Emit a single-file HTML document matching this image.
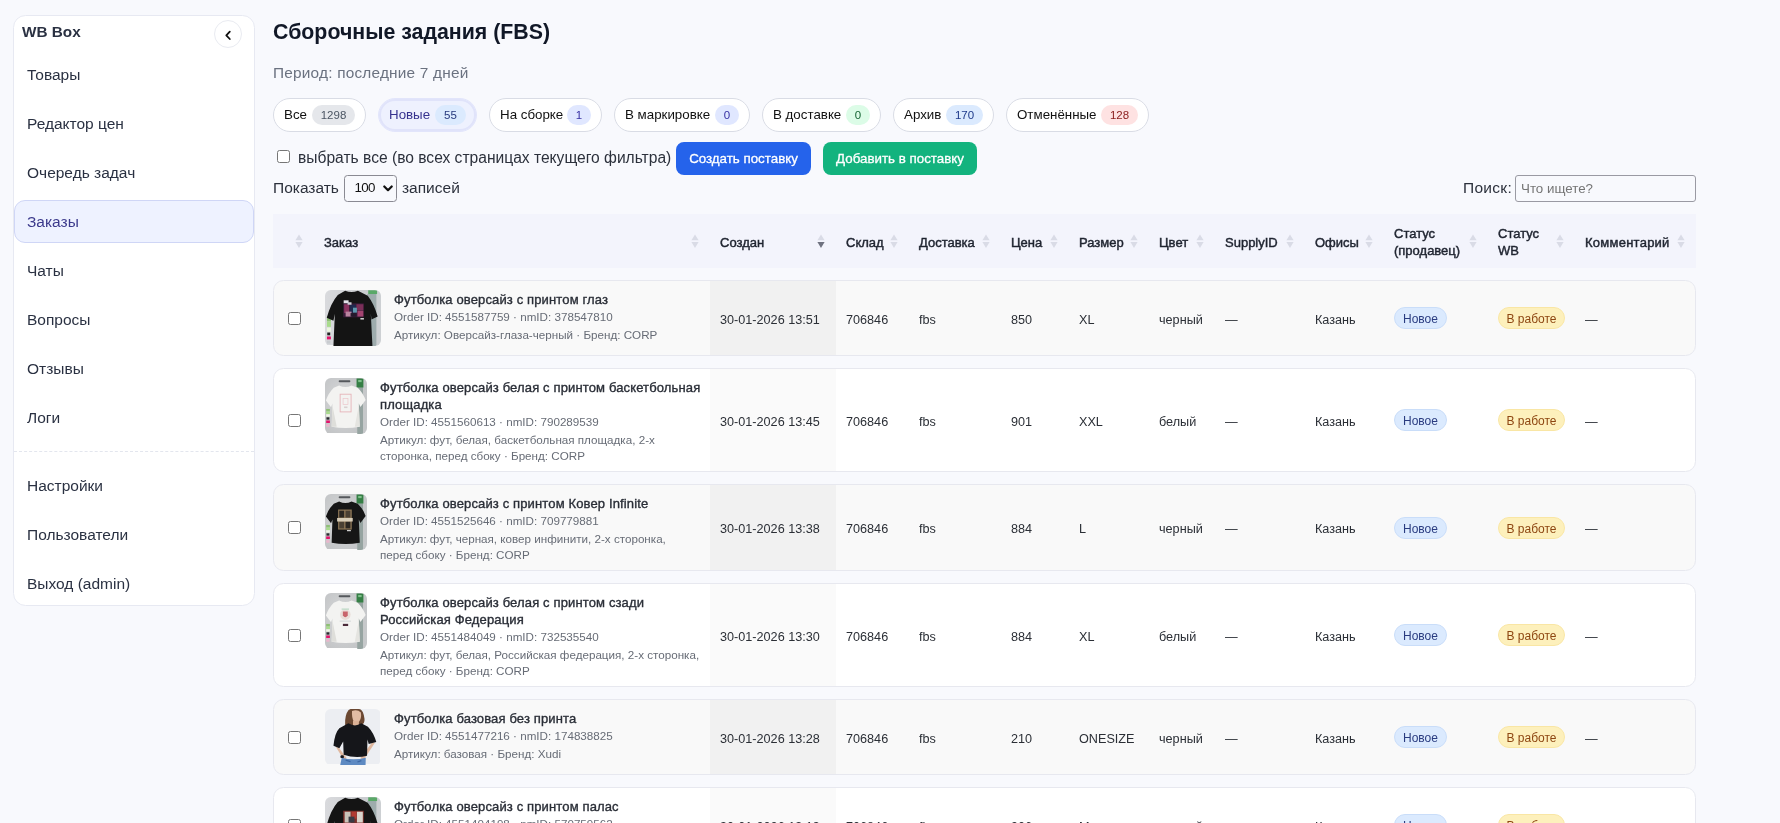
<!DOCTYPE html>
<html lang="ru">
<head>
<meta charset="utf-8">
<title>WB Box — Сборочные задания (FBS)</title>
<style>
*{box-sizing:border-box}
html,body{margin:0;padding:0}
body{will-change:transform;width:1780px;height:823px;overflow:hidden;background:#f8f9fd;font-family:"Liberation Sans",sans-serif;color:#1f2937;position:relative}
/* sidebar */
.side{position:absolute;left:13px;top:15px;width:242px;height:591px;background:#fff;border:1px solid #e7e9f2;border-radius:12.5px}
.brand{position:absolute;left:8px;top:7px;font-weight:700;font-size:15.3px;line-height:18px;color:#2a3142;white-space:nowrap}
.collapse{position:absolute;left:200px;top:4px;width:28px;height:28px;border:1px solid #e9ebf1;border-radius:50%;background:#fff}
.collapse svg{position:absolute;left:0;top:0}
.nav a{position:absolute;left:0;width:240px;height:43px;line-height:41px;padding-left:12px;font-size:15.5px;color:#2a3142;text-decoration:none;border:1px solid transparent;border-radius:11px;white-space:nowrap}
.nav a.act{background:#eef2ff;border-color:#cfd6f6;color:#3c3a8c}
.sep{position:absolute;left:0;top:435px;width:240px;border-top:1px dashed #e3e6ee}
/* main */
h1{position:absolute;left:273px;top:18px;margin:0;font-size:21.35px;line-height:28px;font-weight:700;color:#111827;white-space:nowrap}
.period{position:absolute;left:273px;top:63px;font-size:15.4px;letter-spacing:.2px;line-height:20px;color:#6b7280;white-space:nowrap}
.pill{position:absolute;top:98px;height:34px;border:1px solid #d9dce5;border-radius:17px;background:#fff;font-size:13.33px;line-height:32px;color:#111;padding-left:10px;white-space:nowrap}
.pill b{position:absolute;top:6px;right:10px;height:20px;line-height:20px;border-radius:10px;font-weight:400;font-size:11.5px;text-align:center;padding:0}
.pill.on{background:#eef1fe;border-color:#e2e5fb;color:#37338f;box-shadow:inset 0 0 0 2px #e0e3fa}
.selall{position:absolute;left:298px;top:148px;font-size:15.6px;line-height:20px;color:#2c313c;white-space:nowrap}
.cb{position:absolute;width:13px;height:13px;border:1px solid #767676;border-radius:2.5px;background:#fff}
.btn{position:absolute;top:142px;height:33px;border-radius:8px;color:#fff;font-size:13.33px;line-height:33px;text-align:center;white-space:nowrap;-webkit-text-stroke:.3px #fff}
.len{position:absolute;left:273px;top:178px;font-size:15.5px;line-height:20px;color:#2c313c;white-space:nowrap}
.sel{position:absolute;left:344px;top:175px;width:53px;height:26.5px;border:1px solid #8a8a93;border-radius:3.5px;background:transparent;font-size:13.33px;letter-spacing:-.65px;line-height:23.5px;padding-left:9.5px;color:#111}
.sel svg{position:absolute;right:3.5px;top:8.5px}
.srch{position:absolute;left:1463px;top:178px;letter-spacing:.3px;font-size:15.5px;line-height:20px;color:#2c313c;white-space:nowrap}
.inp{position:absolute;left:1515px;top:175px;width:181px;height:27px;border:1px solid #9a9aa3;border-radius:3px;background:#f8f9fd;font-size:13.33px;line-height:25px;padding-left:5px;color:#757575;white-space:nowrap}
/* table */
.thead{position:absolute;left:273px;top:213.5px;width:1423px;height:54px;background:#f3f4fc}
.th{position:absolute;font-size:13px;line-height:17px;font-weight:400;-webkit-text-stroke:.45px #1f2430;color:#1f2430;white-space:nowrap}
.ar{position:absolute;width:8px;height:15px}
.row{position:absolute;left:273px;width:1423px;border:1px solid #e7e8ef;border-radius:10.5px;background:#fff;overflow:hidden}
.row.odd{background:#f9f9f9}
.row .sc{position:absolute;left:436px;top:-1px;bottom:-1px;width:126px;background:#fafafa}
.row.odd .sc{background:#f1f1f1}
.c{position:absolute;font-size:12.65px;line-height:16px;color:#2b2f36;white-space:nowrap}
.t{position:absolute;font-size:13px;letter-spacing:.14px;line-height:17px;font-weight:400;-webkit-text-stroke:.36px #2a2e37;color:#2a2e37;white-space:nowrap}
.m{position:absolute;font-size:11.65px;line-height:16px;color:#676c76;white-space:nowrap}
.bd{position:absolute;height:22px;line-height:22px;border-radius:11px;font-size:12px;text-align:center;border:1px solid}
.bn{left:1120px;width:53px;background:#dbeafe;border-color:#c9ddf9;color:#2a3c80}
.bw{left:1224px;width:67px;background:#fdf0bc;border-color:#f9e6a4;color:#8e4712}
.im{position:absolute;left:51px;border-radius:6px;overflow:hidden}
.im svg{display:block;filter:blur(.35px)}
</style>
</head>
<body>
<div class="side">
  <div class="brand">WB Box</div>
  <div class="collapse"><svg width="26" height="26" viewBox="0 0 26 26"><path d="M14.8 10.6 L11.3 14.3 L14.8 18" fill="none" stroke="#111" stroke-width="1.8" stroke-linecap="round" stroke-linejoin="round"/></svg></div>
  <div class="nav">
    <a style="top:37px">Товары</a>
    <a style="top:86px">Редактор цен</a>
    <a style="top:135px">Очередь задач</a>
    <a class="act" style="top:184px">Заказы</a>
    <a style="top:233px">Чаты</a>
    <a style="top:282px">Вопросы</a>
    <a style="top:331px">Отзывы</a>
    <a style="top:380px">Логи</a>
    <a style="top:448px">Настройки</a>
    <a style="top:497px">Пользователи</a>
    <a style="top:546px">Выход (admin)</a>
  </div>
  <div class="sep"></div>
</div>

<h1>Сборочные задания (FBS)</h1>
<div class="period">Период: последние 7 дней</div>

<div class="pill" style="left:273px;width:93px">Все<b style="width:43px;background:#e5e7eb;color:#4b5563">1298</b></div>
<div class="pill on" style="left:378px;width:99px">Новые<b style="width:31px;background:#dbeafe;color:#27397d">55</b></div>
<div class="pill" style="left:489px;width:113px">На сборке<b style="width:24px;background:#e0e7ff;color:#3730a3">1</b></div>
<div class="pill" style="left:614px;width:136px">В маркировке<b style="width:24px;background:#e0e7ff;color:#3730a3">0</b></div>
<div class="pill" style="left:762px;width:119px">В доставке<b style="width:24px;background:#dcfce7;color:#166534">0</b></div>
<div class="pill" style="left:893px;width:101px">Архив<b style="width:37px;background:#dbeafe;color:#1e3a8a">170</b></div>
<div class="pill" style="left:1006px;width:143px">Отменённые<b style="width:37px;background:#fee2e2;color:#8a1c1c">128</b></div>

<div class="cb" style="left:277px;top:150px"></div>
<div class="selall">выбрать все (во всех страницах текущего фильтра)</div>
<div class="btn" style="left:676px;width:135px;background:#2563eb">Создать поставку</div>
<div class="btn" style="left:823px;width:154px;background:#13b37e">Добавить в поставку</div>

<div class="len">Показать</div>
<div class="sel">100<svg width="10" height="7" viewBox="0 0 10 7"><path d="M1.3 1.5 L5 5.2 L8.7 1.5" fill="none" stroke="#111" stroke-width="2.2" stroke-linecap="round" stroke-linejoin="round"/></svg></div>
<div class="len" style="left:402px">записей</div>
<div class="srch">Поиск:</div>
<div class="inp">Что ищете?</div>

<div class="thead">
<svg class="ar" style="left:22.4px;top:20.5px" width="8" height="15" viewBox="0 0 8 15"><path d="M4 0.4 L7.6 6.3 H0.4 Z" fill="#d9dbe6"/><path d="M0.4 8 H7.6 L4 13.9 Z" fill="#d9dbe6"/></svg>
<div class="th" style="left:51px;top:20.5px">Заказ</div><svg class="ar" style="left:418.4px;top:20.5px" width="8" height="15" viewBox="0 0 8 15"><path d="M4 0.4 L7.6 6.3 H0.4 Z" fill="#d9dbe6"/><path d="M0.4 8 H7.6 L4 13.9 Z" fill="#d9dbe6"/></svg>
<div class="th" style="left:447px;top:20.5px">Создан</div><svg class="ar" style="left:544.4px;top:20.5px" width="8" height="15" viewBox="0 0 8 15"><path d="M4 0.4 L7.6 6.3 H0.4 Z" fill="#d9dbe6"/><path d="M0.4 8 H7.6 L4 13.9 Z" fill="#6f7280"/></svg>
<div class="th" style="left:573px;top:20.5px">Склад</div><svg class="ar" style="left:617.4px;top:20.5px" width="8" height="15" viewBox="0 0 8 15"><path d="M4 0.4 L7.6 6.3 H0.4 Z" fill="#d9dbe6"/><path d="M0.4 8 H7.6 L4 13.9 Z" fill="#d9dbe6"/></svg>
<div class="th" style="left:646px;top:20.5px">Доставка</div><svg class="ar" style="left:709.4px;top:20.5px" width="8" height="15" viewBox="0 0 8 15"><path d="M4 0.4 L7.6 6.3 H0.4 Z" fill="#d9dbe6"/><path d="M0.4 8 H7.6 L4 13.9 Z" fill="#d9dbe6"/></svg>
<div class="th" style="left:738px;top:20.5px">Цена</div><svg class="ar" style="left:777.4px;top:20.5px" width="8" height="15" viewBox="0 0 8 15"><path d="M4 0.4 L7.6 6.3 H0.4 Z" fill="#d9dbe6"/><path d="M0.4 8 H7.6 L4 13.9 Z" fill="#d9dbe6"/></svg>
<div class="th" style="left:806px;top:20.5px">Размер</div><svg class="ar" style="left:857.4px;top:20.5px" width="8" height="15" viewBox="0 0 8 15"><path d="M4 0.4 L7.6 6.3 H0.4 Z" fill="#d9dbe6"/><path d="M0.4 8 H7.6 L4 13.9 Z" fill="#d9dbe6"/></svg>
<div class="th" style="left:886px;top:20.5px">Цвет</div><svg class="ar" style="left:923.4px;top:20.5px" width="8" height="15" viewBox="0 0 8 15"><path d="M4 0.4 L7.6 6.3 H0.4 Z" fill="#d9dbe6"/><path d="M0.4 8 H7.6 L4 13.9 Z" fill="#d9dbe6"/></svg>
<div class="th" style="left:952px;top:20.5px">SupplyID</div><svg class="ar" style="left:1013.4px;top:20.5px" width="8" height="15" viewBox="0 0 8 15"><path d="M4 0.4 L7.6 6.3 H0.4 Z" fill="#d9dbe6"/><path d="M0.4 8 H7.6 L4 13.9 Z" fill="#d9dbe6"/></svg>
<div class="th" style="left:1042px;top:20.5px">Офисы</div><svg class="ar" style="left:1092.4px;top:20.5px" width="8" height="15" viewBox="0 0 8 15"><path d="M4 0.4 L7.6 6.3 H0.4 Z" fill="#d9dbe6"/><path d="M0.4 8 H7.6 L4 13.9 Z" fill="#d9dbe6"/></svg>
<div class="th" style="left:1121px;top:11.5px">Статус<br>(продавец)</div><svg class="ar" style="left:1196.4px;top:20.5px" width="8" height="15" viewBox="0 0 8 15"><path d="M4 0.4 L7.6 6.3 H0.4 Z" fill="#d9dbe6"/><path d="M0.4 8 H7.6 L4 13.9 Z" fill="#d9dbe6"/></svg>
<div class="th" style="left:1225px;top:11.5px">Статус<br>WB</div><svg class="ar" style="left:1283.4px;top:20.5px" width="8" height="15" viewBox="0 0 8 15"><path d="M4 0.4 L7.6 6.3 H0.4 Z" fill="#d9dbe6"/><path d="M0.4 8 H7.6 L4 13.9 Z" fill="#d9dbe6"/></svg>
<div class="th" style="left:1312px;top:20.5px;letter-spacing:.25px">Комментарий</div><svg class="ar" style="left:1404.4px;top:20.5px" width="8" height="15" viewBox="0 0 8 15"><path d="M4 0.4 L7.6 6.3 H0.4 Z" fill="#d9dbe6"/><path d="M0.4 8 H7.6 L4 13.9 Z" fill="#d9dbe6"/></svg>
</div>

<div class="row odd" style="top:280px;height:76px">
<div class="sc"></div><div class="cb" style="left:14px;top:31px"></div><div class="im" style="top:9px;width:56px;height:56px"><svg width="56" height="56" preserveAspectRatio="none" viewBox="0 0 57 57"><defs><linearGradient id="gA" x1="0" x2="1"><stop offset="0" stop-color="#d9dadd"/><stop offset=".5" stop-color="#cfd1d4"/><stop offset="1" stop-color="#c3c6c9"/></linearGradient></defs><rect width="56" height="56" preserveAspectRatio="none" fill="url(#gA)"/><rect x="43" y="4" width="9.5" height="53" fill="#9eacad"/><rect x="52.5" y="0" width="4.5" height="57" fill="#cdd0d3"/><rect x="44" y="0.3" width="9" height="3.8" fill="#5aa868"/><rect x="2" y="27" width="4" height="5" fill="#8fbf76"/><rect x="2" y="32" width="4" height="5.5" fill="#a9dc8c"/><rect x="2" y="38.3" width="4" height="4.2" fill="#ecf6df"/><rect x="2.3" y="43.3" width="3" height="2.8" fill="#222"/><rect x="2" y="47.3" width="4" height="3" fill="#e2136b"/><rect x="2" y="51.5" width="3.5" height="3" fill="#c9ccd0"/><path d="M20.5 0.8 Q27 3.4 33.5 0.8 L43.5 5.8 Q50 14 53.6 27 L47.3 30 L46.6 24 L48.3 57 H8.6 L10 24.5 L8.6 31.4 L1.8 28.2 Q6 13 13 5 Z" fill="#141414"/><rect x="18.5" y="13.6" width="21" height="14.2" fill="#3a1c3a"/><rect x="19.5" y="14.5" width="5" height="9" fill="#8a3560"/><rect x="25.5" y="15" width="6" height="8" fill="#1f2a4f"/><rect x="32" y="14.5" width="7" height="6" fill="#7a2f58"/><rect x="33" y="21" width="6" height="6" fill="#a34470"/><rect x="28.5" y="18" width="4" height="5" fill="#5e98ae"/><rect x="21" y="22" width="6" height="5" fill="#b9849f"/><rect x="26" y="23.5" width="6" height="3.6" fill="#241a2c"/><rect x="19" y="10.5" width="5" height="3" fill="#e4e4ea"/><rect x="23" y="12.5" width="4" height="2.5" fill="#cfcfd8"/><rect x="36" y="28.5" width="3.6" height="1.6" fill="#d0d0d0"/></svg></div>
<div class="t" style="left:120px;top:10px">Футболка оверсайз с принтом глаз</div><div class="m" style="left:120px;top:28px">Order ID: 4551587759 · nmID: 378547810</div><div class="m" style="left:120px;top:46px">Артикул: Оверсайз-глаза-черный · Бренд: CORP</div>
<div class="c" style="left:446px;top:31.0px">30-01-2026 13:51</div><div class="c" style="left:572px;top:31.0px">706846</div><div class="c" style="left:645px;top:31.0px">fbs</div><div class="c" style="left:737px;top:31.0px">850</div><div class="c" style="left:805px;top:31.0px">XL</div><div class="c" style="left:885px;top:31.0px">черный</div><div class="c" style="left:951px;top:31.0px">—</div><div class="c" style="left:1041px;top:31.0px">Казань</div><div class="c" style="left:1311px;top:31.0px">—</div><div class="bd bn" style="top:26.0px">Новое</div><div class="bd bw" style="top:26.0px">В работе</div>
</div>
<div class="row" style="top:368px;height:104px">
<div class="sc"></div><div class="cb" style="left:14px;top:45px"></div><div class="im" style="top:9px;width:42px;height:56px"><svg width="42" height="56" preserveAspectRatio="none" viewBox="0 0 43 57"><defs><radialGradient id="gBa" cx=".45" cy=".45" r=".75"><stop offset="0" stop-color="#d9dadb"/><stop offset="1" stop-color="#bfc1c3"/></radialGradient></defs><rect width="42" height="56" preserveAspectRatio="none" fill="url(#gBa)"/><rect x="33" y="9.5" width="6" height="47.5" fill="#96a4a1"/><rect x="39" y="0" width="4" height="57" fill="#c6c8ca"/><rect x="32.3" y="0.5" width="7" height="9.2" fill="#357f45"/><rect x="34" y="2" width="3.5" height="2.2" fill="#7fc08a"/><rect x="14" y="2.2" width="12" height="2.2" rx="1" fill="#55585c"/><rect x="1.2" y="31.5" width="3.8" height="2.6" fill="#8fbf76"/><rect x="1.2" y="34.1" width="3.8" height="2.6" fill="#a9dc8c"/><rect x="1.2" y="36.9" width="3.8" height="2.4" fill="#eef6e4"/><rect x="1.5" y="40" width="3" height="2.4" fill="#2a2a2e"/><rect x="1.2" y="43.2" width="3.8" height="2.6" fill="#e2136b"/><rect x="1.2" y="47" width="3.4" height="2.6" fill="#eab6cc"/><path d="M14.5 7.6 Q20.8 10.8 27.2 7.6 L33.5 9.8 Q39 15 41.6 22.5 L36.3 29.6 L34.6 26 L35.6 49.6 Q21 52 6.8 49.6 L7.6 26 L6.2 29.8 L0.9 23 Q3.5 15 9 9.8 Z" fill="#f3f3f1"/><path d="M7.6 28 L6.9 49.5 H12 Z" fill="#dededa"/><path d="M34.6 28 L35.5 49.5 H30.5 Z" fill="#e4e4e0"/><rect x="15.5" y="16.5" width="11.2" height="18" fill="none" stroke="#e6b3b8" stroke-width="0.9"/><rect x="18.5" y="21" width="5" height="6" fill="none" stroke="#ecc6ca" stroke-width="0.7"/><rect x="19.5" y="29" width="3.5" height="1.6" fill="#d9d0d0"/></svg></div>
<div class="t" style="left:106px;top:10px">Футболка оверсайз белая с принтом баскетбольная</div><div class="t" style="left:106px;top:27px">площадка</div><div class="m" style="left:106px;top:45px">Order ID: 4551560613 · nmID: 790289539</div><div class="m" style="left:106px;top:63px">Артикул: фут, белая, баскетбольная площадка, 2-х</div><div class="m" style="left:106px;top:79px">сторонка, перед сбоку · Бренд: CORP</div>
<div class="c" style="left:446px;top:45.0px">30-01-2026 13:45</div><div class="c" style="left:572px;top:45.0px">706846</div><div class="c" style="left:645px;top:45.0px">fbs</div><div class="c" style="left:737px;top:45.0px">901</div><div class="c" style="left:805px;top:45.0px">XXL</div><div class="c" style="left:885px;top:45.0px">белый</div><div class="c" style="left:951px;top:45.0px">—</div><div class="c" style="left:1041px;top:45.0px">Казань</div><div class="c" style="left:1311px;top:45.0px">—</div><div class="bd bn" style="top:40.0px">Новое</div><div class="bd bw" style="top:40.0px">В работе</div>
</div>
<div class="row odd" style="top:484px;height:87px">
<div class="sc"></div><div class="cb" style="left:14px;top:36px"></div><div class="im" style="top:9px;width:42px;height:56px"><svg width="42" height="56" preserveAspectRatio="none" viewBox="0 0 43 57"><defs><radialGradient id="gBb" cx=".45" cy=".45" r=".75"><stop offset="0" stop-color="#d9dadb"/><stop offset="1" stop-color="#bfc1c3"/></radialGradient></defs><rect width="42" height="56" preserveAspectRatio="none" fill="url(#gBb)"/><rect x="33" y="9.5" width="6" height="47.5" fill="#96a4a1"/><rect x="39" y="0" width="4" height="57" fill="#c6c8ca"/><rect x="32.3" y="0.5" width="7" height="9.2" fill="#357f45"/><rect x="34" y="2" width="3.5" height="2.2" fill="#7fc08a"/><rect x="14" y="2.2" width="12" height="2.2" rx="1" fill="#55585c"/><rect x="1.2" y="31.5" width="3.8" height="2.6" fill="#8fbf76"/><rect x="1.2" y="34.1" width="3.8" height="2.6" fill="#a9dc8c"/><rect x="1.2" y="36.9" width="3.8" height="2.4" fill="#eef6e4"/><rect x="1.5" y="40" width="3" height="2.4" fill="#2a2a2e"/><rect x="1.2" y="43.2" width="3.8" height="2.6" fill="#e2136b"/><rect x="1.2" y="47" width="3.4" height="2.6" fill="#eab6cc"/><path d="M14.5 7.6 Q20.8 10.8 27.2 7.6 L33.5 9.8 Q39 15 41.6 22.5 L36.3 29.6 L34.6 26 L35.6 49.6 Q21 52 6.8 49.6 L7.6 26 L6.2 29.8 L0.9 23 Q3.5 15 9 9.8 Z" fill="#161616"/><rect x="13.4" y="15.8" width="14" height="20.4" fill="#8d7656"/><rect x="14.6" y="17" width="5" height="7" fill="#2a2622"/><rect x="21" y="17" width="5" height="7" fill="#4a4034"/><rect x="14.6" y="28" width="5" height="7" fill="#4a4034"/><rect x="21" y="28" width="5" height="7" fill="#2a2622"/><rect x="12.4" y="24.4" width="16" height="3.6" fill="#d8cdb8"/><rect x="22.5" y="36.6" width="4" height="1.3" fill="#cfcfcf"/></svg></div>
<div class="t" style="left:106px;top:10px">Футболка оверсайз с принтом Ковер Infinite</div><div class="m" style="left:106px;top:28px">Order ID: 4551525646 · nmID: 709779881</div><div class="m" style="left:106px;top:46px">Артикул: фут, черная, ковер инфинити, 2-х сторонка,</div><div class="m" style="left:106px;top:62px">перед сбоку · Бренд: CORP</div>
<div class="c" style="left:446px;top:36.0px">30-01-2026 13:38</div><div class="c" style="left:572px;top:36.0px">706846</div><div class="c" style="left:645px;top:36.0px">fbs</div><div class="c" style="left:737px;top:36.0px">884</div><div class="c" style="left:805px;top:36.0px">L</div><div class="c" style="left:885px;top:36.0px">черный</div><div class="c" style="left:951px;top:36.0px">—</div><div class="c" style="left:1041px;top:36.0px">Казань</div><div class="c" style="left:1311px;top:36.0px">—</div><div class="bd bn" style="top:32.0px">Новое</div><div class="bd bw" style="top:32.0px">В работе</div>
</div>
<div class="row" style="top:583px;height:104px">
<div class="sc"></div><div class="cb" style="left:14px;top:45px"></div><div class="im" style="top:9px;width:42px;height:56px"><svg width="42" height="56" preserveAspectRatio="none" viewBox="0 0 43 57"><defs><radialGradient id="gBc" cx=".45" cy=".45" r=".75"><stop offset="0" stop-color="#d9dadb"/><stop offset="1" stop-color="#bfc1c3"/></radialGradient></defs><rect width="42" height="56" preserveAspectRatio="none" fill="url(#gBc)"/><rect x="33" y="9.5" width="6" height="47.5" fill="#96a4a1"/><rect x="39" y="0" width="4" height="57" fill="#c6c8ca"/><rect x="32.3" y="0.5" width="7" height="9.2" fill="#357f45"/><rect x="34" y="2" width="3.5" height="2.2" fill="#7fc08a"/><rect x="14" y="2.2" width="12" height="2.2" rx="1" fill="#55585c"/><rect x="1.2" y="31.5" width="3.8" height="2.6" fill="#8fbf76"/><rect x="1.2" y="34.1" width="3.8" height="2.6" fill="#a9dc8c"/><rect x="1.2" y="36.9" width="3.8" height="2.4" fill="#eef6e4"/><rect x="1.5" y="40" width="3" height="2.4" fill="#2a2a2e"/><rect x="1.2" y="43.2" width="3.8" height="2.6" fill="#e2136b"/><rect x="1.2" y="47" width="3.4" height="2.6" fill="#eab6cc"/><path d="M14.5 7.6 Q20.8 10.8 27.2 7.6 L33.5 9.8 Q39 15 41.6 22.5 L36.3 29.6 L34.6 26 L35.6 49.6 Q21 52 6.8 49.6 L7.6 26 L6.2 29.8 L0.9 23 Q3.5 15 9 9.8 Z" fill="#f3f3f1"/><path d="M7.6 28 L6.9 49.5 H12 Z" fill="#dededa"/><path d="M34.6 28 L35.5 49.5 H30.5 Z" fill="#e4e4e0"/><circle cx="20.8" cy="22" r="5.4" fill="#eaded8"/><path d="M18.3 18.8 H23.3 V23 Q20.8 26.6 18.3 23 Z" fill="#c9656b"/><rect x="15" y="28.2" width="11.5" height="0.8" fill="#c8cfd0"/><rect x="18.3" y="31.4" width="5.4" height="2.2" fill="#4a2a3a"/><rect x="17" y="15.8" width="7.6" height="1.2" fill="#b9d8c2"/></svg></div>
<div class="t" style="left:106px;top:10px">Футболка оверсайз белая с принтом сзади</div><div class="t" style="left:106px;top:27px">Российская Федерация</div><div class="m" style="left:106px;top:45px">Order ID: 4551484049 · nmID: 732535540</div><div class="m" style="left:106px;top:63px">Артикул: фут, белая, Российская федерация, 2-х сторонка,</div><div class="m" style="left:106px;top:79px">перед сбоку · Бренд: CORP</div>
<div class="c" style="left:446px;top:45.0px">30-01-2026 13:30</div><div class="c" style="left:572px;top:45.0px">706846</div><div class="c" style="left:645px;top:45.0px">fbs</div><div class="c" style="left:737px;top:45.0px">884</div><div class="c" style="left:805px;top:45.0px">XL</div><div class="c" style="left:885px;top:45.0px">белый</div><div class="c" style="left:951px;top:45.0px">—</div><div class="c" style="left:1041px;top:45.0px">Казань</div><div class="c" style="left:1311px;top:45.0px">—</div><div class="bd bn" style="top:40.0px">Новое</div><div class="bd bw" style="top:40.0px">В работе</div>
</div>
<div class="row odd" style="top:699px;height:76px">
<div class="sc"></div><div class="cb" style="left:14px;top:31px"></div><div class="im" style="top:9px;width:56px;height:56px"><svg width="56" height="56" preserveAspectRatio="none" viewBox="0 0 57 57"><rect width="56" height="56" preserveAspectRatio="none" fill="#eceef2"/><path d="M24 1 Q20 6 20.5 16 Q22 22 25 17 L38 16 Q41.5 14 39.5 6 Q38 0 34 0 H26 Z" fill="#6b4832"/><path d="M27.5 2 Q33 0 36.5 3.5 Q37.5 9 35 12.5 Q32 15.5 29.5 13 Q27 9 27.5 2 Z" fill="#e2bca4"/><path d="M28.5 12 H34.5 V17 H28.5 Z" fill="#dcb297"/><path d="M11 38.5 L14.5 40 L22 50 L19.5 52.5 Z" fill="#e0b89f"/><path d="M51 34 L47.5 34.5 L36 50 L39 52.5 Z" fill="#e0b89f"/><path d="M23.8 14.6 Q30.5 19 36.9 14.6 L43.7 18 Q49.5 24 52.2 33.6 L44.5 35.5 L43.2 31 L42.8 47.5 Q31 50.5 19 46.5 L18.5 33 L14.6 40 L8.6 37.4 Q10 24 14.6 19.5 Z" fill="#15161a"/><path d="M15.5 57 L17 49.5 Q29 53 41.5 49.5 L41.3 57 Z" fill="#5e8ac2"/><path d="M21 52 L26 53.5 M37 52.5 L33 54" stroke="#3d68a3" stroke-width="1.2" fill="none"/><rect x="15.8" y="47" width="3.4" height="3" rx="1" fill="#1b1c22"/></svg></div>
<div class="t" style="left:120px;top:10px">Футболка базовая без принта</div><div class="m" style="left:120px;top:28px">Order ID: 4551477216 · nmID: 174838825</div><div class="m" style="left:120px;top:46px">Артикул: базовая · Бренд: Xudi</div>
<div class="c" style="left:446px;top:31.0px">30-01-2026 13:28</div><div class="c" style="left:572px;top:31.0px">706846</div><div class="c" style="left:645px;top:31.0px">fbs</div><div class="c" style="left:737px;top:31.0px">210</div><div class="c" style="left:805px;top:31.0px">ONESIZE</div><div class="c" style="left:885px;top:31.0px">черный</div><div class="c" style="left:951px;top:31.0px">—</div><div class="c" style="left:1041px;top:31.0px">Казань</div><div class="c" style="left:1311px;top:31.0px">—</div><div class="bd bn" style="top:26.0px">Новое</div><div class="bd bw" style="top:26.0px">В работе</div>
</div>
<div class="row" style="top:787px;height:76px">
<div class="sc"></div><div class="cb" style="left:14px;top:31px"></div><div class="im" style="top:9px;width:56px;height:56px"><svg width="56" height="56" preserveAspectRatio="none" viewBox="0 0 57 57"><defs><linearGradient id="gA6" x1="0" x2="1"><stop offset="0" stop-color="#d9dadd"/><stop offset=".5" stop-color="#cfd1d4"/><stop offset="1" stop-color="#c3c6c9"/></linearGradient></defs><rect width="56" height="56" preserveAspectRatio="none" fill="url(#gA6)"/><rect x="43" y="4" width="9.5" height="53" fill="#9eacad"/><rect x="52.5" y="0" width="4.5" height="57" fill="#cdd0d3"/><rect x="44" y="0.3" width="9" height="3.8" fill="#5aa868"/><rect x="2" y="27" width="4" height="5" fill="#8fbf76"/><rect x="2" y="32" width="4" height="5.5" fill="#a9dc8c"/><rect x="2" y="38.3" width="4" height="4.2" fill="#ecf6df"/><rect x="2.3" y="43.3" width="3" height="2.8" fill="#222"/><rect x="2" y="47.3" width="4" height="3" fill="#e2136b"/><rect x="2" y="51.5" width="3.5" height="3" fill="#c9ccd0"/><path d="M20.5 0.8 Q27 3.4 33.5 0.8 L43.5 5.8 Q50 14 53.6 27 L47.3 30 L46.6 24 L48.3 57 H8.6 L10 24.5 L8.6 31.4 L1.8 28.2 Q6 13 13 5 Z" fill="#141414"/><rect x="18.5" y="14" width="21" height="14" fill="#7a2f2a"/><rect x="20" y="15" width="6" height="11" fill="#c9c2b8"/><rect x="27" y="15" width="5" height="7" fill="#b33a32"/><rect x="32.5" y="15" width="6" height="11" fill="#d9d4cc"/><rect x="24" y="20" width="6" height="6" fill="#3a3a44"/></svg></div>
<div class="t" style="left:120px;top:10px">Футболка оверсайз с принтом палас</div><div class="m" style="left:120px;top:28px">Order ID: 4551404198 · nmID: 570759562</div><div class="m" style="left:120px;top:46px">Артикул: Оверсайз-палас-черный · Бренд: CORP</div>
<div class="c" style="left:446px;top:31.0px">30-01-2026 13:13</div><div class="c" style="left:572px;top:31.0px">706846</div><div class="c" style="left:645px;top:31.0px">fbs</div><div class="c" style="left:737px;top:31.0px">906</div><div class="c" style="left:805px;top:31.0px">M</div><div class="c" style="left:885px;top:31.0px">черный</div><div class="c" style="left:951px;top:31.0px">—</div><div class="c" style="left:1041px;top:31.0px">Казань</div><div class="c" style="left:1311px;top:31.0px">—</div><div class="bd bn" style="top:26.0px">Новое</div><div class="bd bw" style="top:26.0px">В работе</div>
</div>

</body>
</html>
